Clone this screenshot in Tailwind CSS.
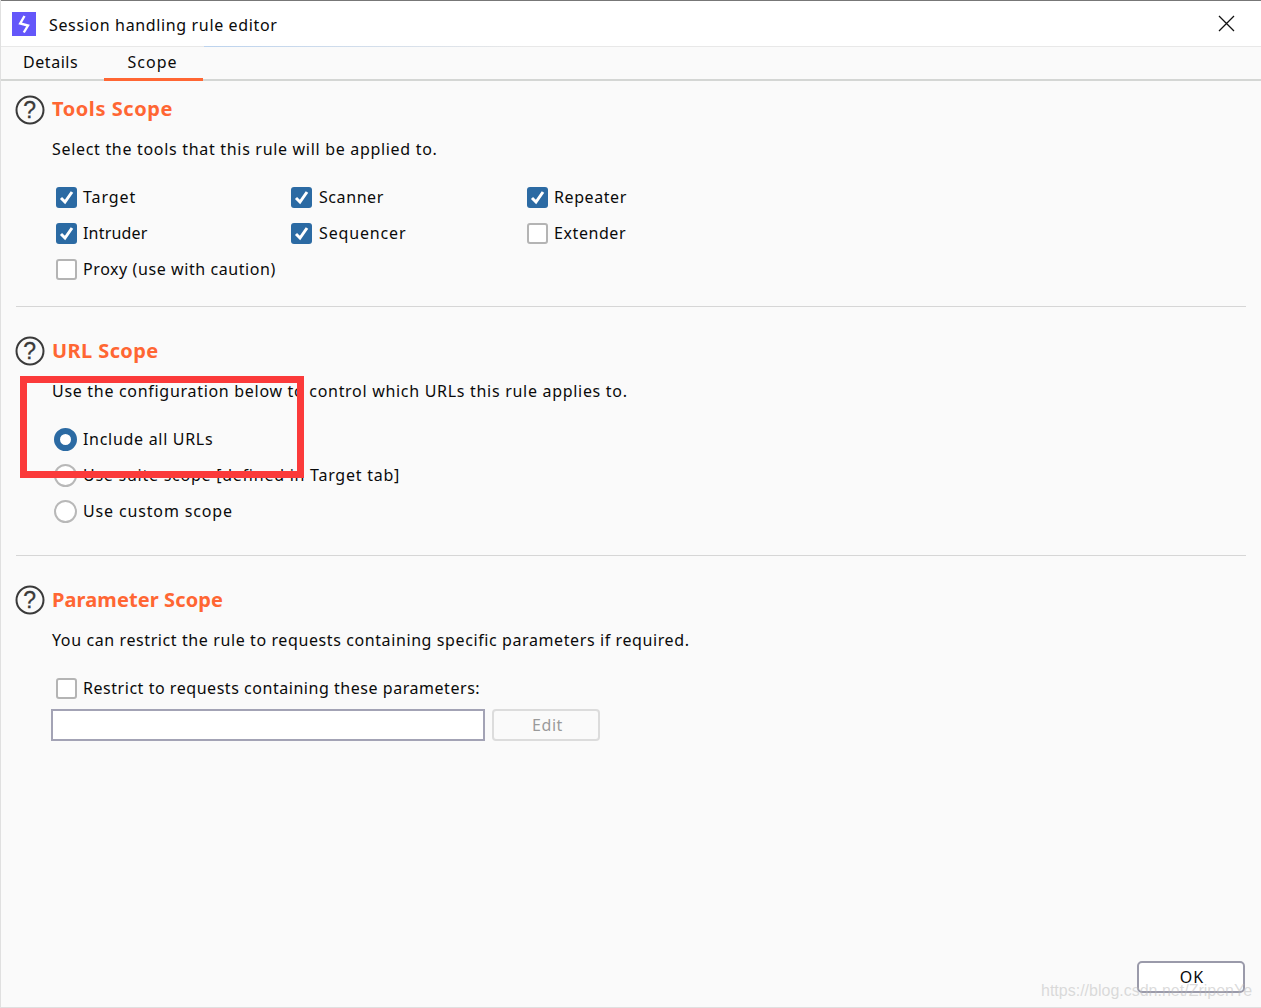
<!DOCTYPE html>
<html><head><meta charset="utf-8">
<script src="https://cdn.jsdelivr.net/npm/@tailwindcss/browser@4"></script>
</head>
<body class="bg-[#fafafa]">
<div class="relative w-[1261px] h-[1008px] overflow-hidden flex flex-col bg-[#fafafa] text-[#0a0a0a] font-['Noto_Sans',sans-serif] text-[16px] tracking-[0.58px] border-l border-b border-[#e0e0e0]">
  <header class="h-[47px] shrink-0 bg-white border-t border-[#777] flex items-center pl-[11px] pr-[26px] border-b border-b-[#e8e8e8]">
    <svg class="w-6 h-6 shrink-0" viewBox="0 0 24 24"><rect width="24" height="24" fill="#6457fa"/><path d="M12.5 4 L8.2 11.5 L16 13.5 L11.8 20.5" fill="none" stroke="#fff" stroke-width="2.4"/></svg>
    <span class="ml-[13px] leading-none pt-[2px] tracking-[0.64px]">Session handling rule editor</span>
    <svg class="ml-auto w-[17px] h-[17px]" viewBox="0 0 17 17"><path d="M1 1 L16 16 M16 1 L1 16" stroke="#111" stroke-width="1.3"/></svg>
  </header>
  <nav class="h-[34px] shrink-0 flex border-b-2 border-[#d4d6d4]">
    <div class="w-[103px] pl-[22px] pt-[2px] leading-[26px] tracking-[0.55px]">Details</div>
    <div class="w-[99px] h-[34px] text-center pt-[2px] pr-[2px] leading-[26px] border-b-[3px] border-[#ff6633] tracking-[1px]">Scope</div>
  </nav>
  <main class="flex-1 pl-[15px] pr-[15px]">
    <section class="h-[226px] pt-[14px] border-b border-[#d6d6d6]">
      <div class="flex items-center h-[30px]">
        <svg class="w-[30px] h-[30px] shrink-0 -ml-px" viewBox="0 0 30 30"><circle cx="15" cy="15" r="13.5" fill="none" stroke="#3a3a3a" stroke-width="2"/><text x="15" y="23" text-anchor="middle" font-size="23" fill="#3a3a3a" stroke="#3a3a3a" stroke-width="0.3" font-family="Liberation Sans">?</text></svg>
        <h2 class="ml-[7px] -mt-[2px] font-bold text-[20px] tracking-[0.57px] text-[#ff6633]">Tools Scope</h2>
      </div>
      <p class="ml-[36px] mt-[12px] h-[24px] leading-[24px] tracking-[0.69px]">Select the tools that this rule will be applied to.</p>
      <div class="ml-[40px] mt-[18px] grid grid-cols-[235px_236px_235px] auto-rows-[36px] items-center">
        <label class="flex items-center"><svg class="w-[21px] h-[21px] shrink-0" viewBox="0 0 21 21"><rect width="21" height="21" rx="3" fill="#2b6aa3"/><path d="M5 11 L9 15 L16 5" fill="none" stroke="#fff" stroke-width="3"/></svg><span class="ml-[6px] tracking-[0.9px]">Target</span></label>
        <label class="flex items-center"><svg class="w-[21px] h-[21px] shrink-0" viewBox="0 0 21 21"><rect width="21" height="21" rx="3" fill="#2b6aa3"/><path d="M5 11 L9 15 L16 5" fill="none" stroke="#fff" stroke-width="3"/></svg><span class="ml-[7px]">Scanner</span></label>
        <label class="flex items-center"><svg class="w-[21px] h-[21px] shrink-0" viewBox="0 0 21 21"><rect width="21" height="21" rx="3" fill="#2b6aa3"/><path d="M5 11 L9 15 L16 5" fill="none" stroke="#fff" stroke-width="3"/></svg><span class="ml-[6px]">Repeater</span></label>
        <label class="flex items-center"><svg class="w-[21px] h-[21px] shrink-0" viewBox="0 0 21 21"><rect width="21" height="21" rx="3" fill="#2b6aa3"/><path d="M5 11 L9 15 L16 5" fill="none" stroke="#fff" stroke-width="3"/></svg><span class="ml-[6px] tracking-[0.2px]">Intruder</span></label>
        <label class="flex items-center"><svg class="w-[21px] h-[21px] shrink-0" viewBox="0 0 21 21"><rect width="21" height="21" rx="3" fill="#2b6aa3"/><path d="M5 11 L9 15 L16 5" fill="none" stroke="#fff" stroke-width="3"/></svg><span class="ml-[7px] tracking-[0.85px]">Sequencer</span></label>
        <label class="flex items-center"><span class="w-[21px] h-[21px] shrink-0 rounded-[3px] bg-white border-2 border-[#b4b4b4]"></span><span class="ml-[6px]">Extender</span></label>
        <label class="flex items-center col-span-2"><span class="w-[21px] h-[21px] shrink-0 rounded-[3px] bg-white border-2 border-[#b4b4b4]"></span><span class="ml-[6px]">Proxy (use with caution)</span></label>
      </div>
    </section>
    <section class="h-[249px] pt-[29px] border-b border-[#d6d6d6]">
      <div class="flex items-center h-[30px]">
        <svg class="w-[30px] h-[30px] shrink-0 -ml-px" viewBox="0 0 30 30"><circle cx="15" cy="15" r="13.5" fill="none" stroke="#3a3a3a" stroke-width="2"/><text x="15" y="23" text-anchor="middle" font-size="23" fill="#3a3a3a" stroke="#3a3a3a" stroke-width="0.3" font-family="Liberation Sans">?</text></svg>
        <h2 class="ml-[7px] font-bold text-[20px] tracking-[0.4px] text-[#ff6633]">URL Scope</h2>
      </div>
      <p class="ml-[36px] mt-[13px] h-[24px] leading-[24px] tracking-[0.7px]">Use the configuration below to control which URLs this rule applies to.</p>
      <div class="ml-[38px] mt-[18px] flex flex-col">
        <label class="flex items-center h-[36px]"><span class="w-[23px] h-[23px] shrink-0 rounded-full bg-white border-[6px] border-[#2b6aa3]"></span><span class="ml-[6px] tracking-[0.7px]">Include all URLs</span></label>
        <label class="flex items-center h-[36px]"><span class="w-[23px] h-[23px] shrink-0 rounded-full bg-white border-2 border-[#b8b8b8]"></span><span class="ml-[6px] tracking-[0.75px]">Use suite scope [defined in Target tab]</span></label>
        <label class="flex items-center h-[36px]"><span class="w-[23px] h-[23px] shrink-0 rounded-full bg-white border-2 border-[#b8b8b8]"></span><span class="ml-[6px] tracking-[0.85px]">Use custom scope</span></label>
      </div>
    </section>
    <section class="pt-[29px]">
      <div class="flex items-center h-[30px]">
        <svg class="w-[30px] h-[30px] shrink-0 -ml-px" viewBox="0 0 30 30"><circle cx="15" cy="15" r="13.5" fill="none" stroke="#3a3a3a" stroke-width="2"/><text x="15" y="23" text-anchor="middle" font-size="23" fill="#3a3a3a" stroke="#3a3a3a" stroke-width="0.3" font-family="Liberation Sans">?</text></svg>
        <h2 class="ml-[7px] font-bold text-[20px] tracking-[0.1px] text-[#ff6633]">Parameter Scope</h2>
      </div>
      <p class="ml-[36px] mt-[13px] h-[24px] leading-[24px] tracking-[0.6px]">You can restrict the rule to requests containing specific parameters if required.</p>
      <label class="ml-[40px] mt-[24px] h-[24px] flex items-center"><span class="w-[21px] h-[21px] shrink-0 rounded-[3px] bg-white border-2 border-[#b4b4b4]"></span><span class="ml-[6px] tracking-[0.54px]">Restrict to requests containing these parameters:</span></label>
      <div class="ml-[35px] mt-[9px] flex gap-[7px]">
        <div class="w-[434px] h-[32px] bg-white border-2 border-[#a3a3b5]"></div>
        <button class="w-[108px] h-[32px] rounded-[4px] bg-[#fafafa] border-2 border-[#dcdcdc] text-[#9a9a9a] leading-none pl-[3px]">Edit</button>
      </div>
    </section>
  </main>
  <div class="absolute left-[203px] top-[46px] w-[320px] h-px bg-gradient-to-r from-[#bcd3ee] to-[#e8e8e8]"></div>
  <button class="absolute left-[1136px] top-[961px] w-[108px] h-[32px] rounded-[5px] bg-white border-2 border-[#9a9aaa] leading-none pl-[2px] tracking-[1px]">OK</button>
  <div class="absolute left-[1040px] top-[980px] font-['Liberation_Sans',sans-serif] text-[16px] tracking-[0px] leading-[22px] text-[#b8b8b8]/50">https://blog.csdn.net/ZripenYe</div>
  <div class="absolute left-[19px] top-[376px] w-[284px] h-[102px] border-[7px] border-[#fb3a3a]"></div>
</div>
</body></html>
